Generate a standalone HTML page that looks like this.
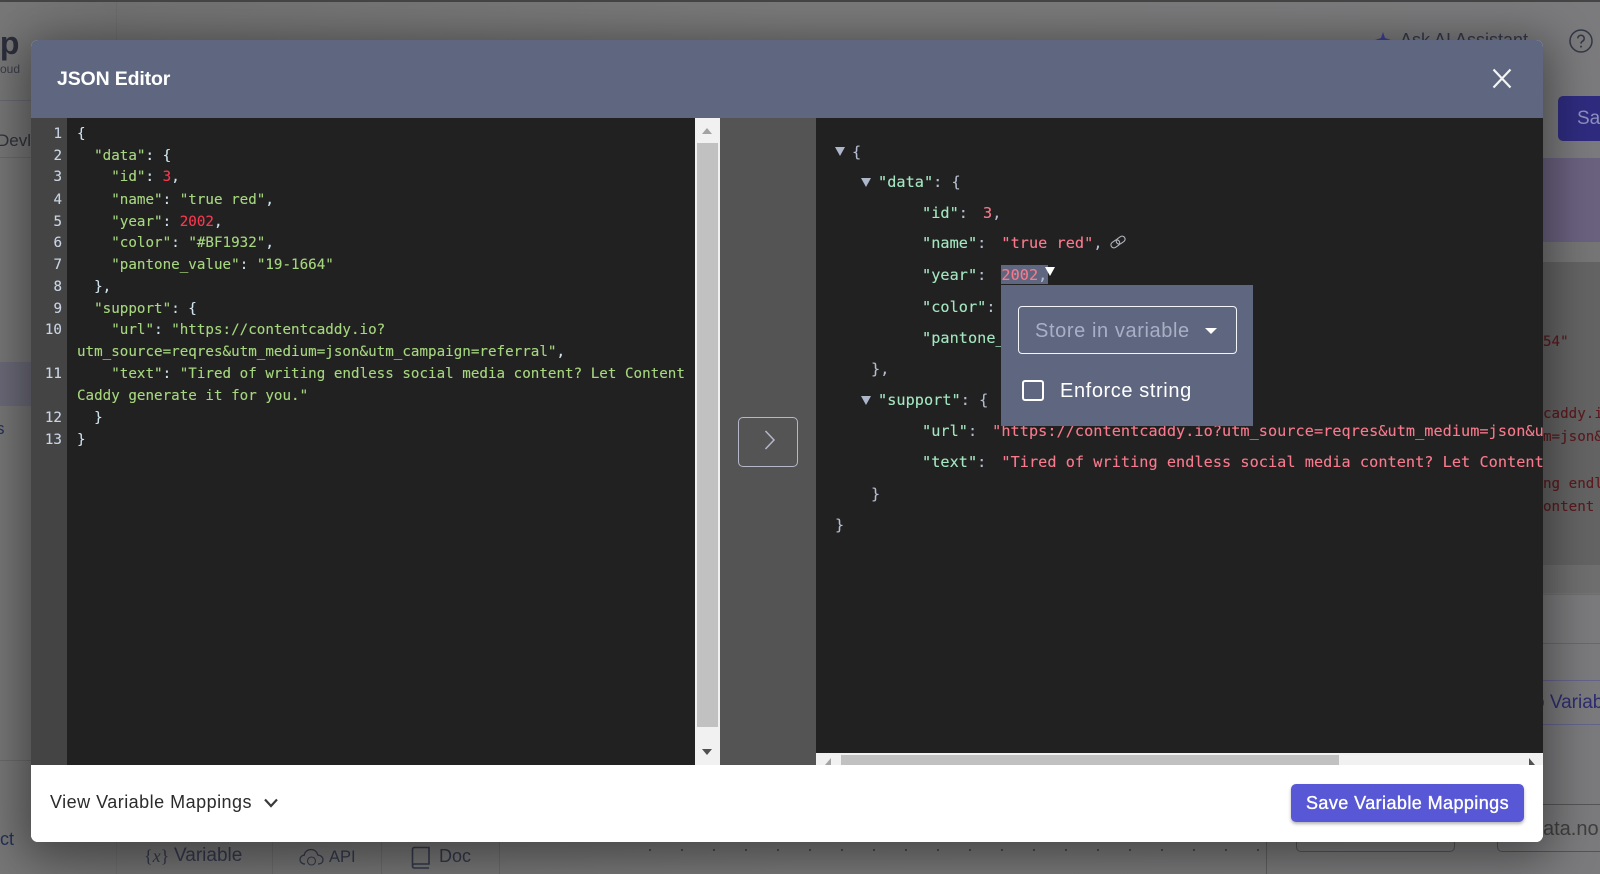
<!DOCTYPE html>
<html lang="en">
<head>
<meta charset="utf-8">
<title>JSON Editor</title>
<style>
html,body{margin:0;padding:0;width:1600px;height:874px;overflow:hidden;background:#787878}
*{box-sizing:border-box}
.a{position:absolute}
#bg{position:absolute;left:0;top:0;width:1600px;height:874px;overflow:hidden;font-family:"Liberation Sans",sans-serif;color:#33384a;background:linear-gradient(90deg,#777 0,#727272 7%,#7a7a7a 50%,#7b7b7d 100%)}
.t{position:absolute;white-space:pre}
#modal{position:absolute;left:31px;top:40px;width:1512px;height:802px;border-radius:7px;overflow:hidden;background:#fff}
#shadow{position:absolute;left:31px;top:40px;width:1512px;height:802px;border-radius:7px;box-shadow:0 8px 46px 8px rgba(0,0,0,.42)}
#head{position:absolute;left:0;top:0;width:1512px;height:78px;background:#5f6780}
#title{position:absolute;left:26px;top:26px;font:bold 19.5px/26px "Liberation Sans",sans-serif;color:#fff;letter-spacing:-.15px;white-space:pre}
#gutter{position:absolute;left:0;top:78px;width:36px;height:647px;background:#444}
#left{position:absolute;left:36px;top:78px;width:628px;height:647px;background:#212121}
#mid{position:absolute;left:689px;top:78px;width:96px;height:647px;background:#545454}
#right{position:absolute;left:785px;top:78px;width:727px;height:647px;background:#212121;overflow:hidden}
.m{font-family:"DejaVu Sans Mono","Liberation Mono",monospace;font-size:14.2px;letter-spacing:.02px;white-space:pre;position:absolute;-webkit-text-stroke:.12px}
.n{color:#c9d4e4;text-align:right;width:31px;left:0;line-height:22px;height:22px}
.l{line-height:22px;height:22px;left:10px;color:#cfe3ee}
.g{color:#a6d67e}.r{color:#f8384f}
.rl{line-height:22px;height:22px;color:#b4bccf;font-size:15.2px;letter-spacing:.05px}
.k{color:#a4e6c0}.v{color:#f87a8c;margin-left:15px}
.tri{position:absolute;width:0;height:0;border-left:5.5px solid transparent;border-right:5.5px solid transparent;border-top:9px solid #aeb6cb}
#pop{position:absolute;left:185px;top:167px;width:252px;height:141px;background:#5f6780}
#sel{position:absolute;left:17px;top:21px;width:219px;height:48px;border:1.5px solid #f4f5f9;border-radius:4px}
.ui{font-family:"Liberation Sans",sans-serif;white-space:pre;position:absolute}
#foot{position:absolute;left:0;top:725px;width:1512px;height:77px;background:#fff}
#btn{position:absolute;left:1260px;top:19px;width:233px;height:38px;background:#5858d6;border-radius:5px;box-shadow:0 2px 3px rgba(0,0,0,.3);color:#fff;text-align:center;font:18px/38px "Liberation Sans",sans-serif;letter-spacing:.42px;-webkit-text-stroke:.35px #fff;white-space:pre}
</style>
</head>
<body>
<div id="bg">
  <div class="a" style="left:0;top:0;width:1600px;height:2px;background:#454545"></div>
  <div class="a" style="left:116px;top:2px;width:1px;height:872px;background:#6c6c6c"></div>
  <div class="t" style="left:-9px;top:24px;font:bold 32px/38px 'Liberation Sans',sans-serif;color:#2c2f3b"> p</div>
  <div class="t" style="left:0;top:61px;font:12px/16px 'Liberation Sans',sans-serif;color:#3b3e4a">oud</div>
  <div class="a" style="left:0;top:100px;width:116px;height:1px;background:#666a70"></div>
  <div class="t" style="left:-3px;top:130px;font:17px/22px 'Liberation Sans',sans-serif;color:#30323c">Devl</div>
  <div class="a" style="left:0;top:157px;width:116px;height:1px;background:#666a70"></div>
  <div class="a" style="left:0;top:362px;width:116px;height:44px;background:#6b6a78"></div>
  <div class="t" style="left:-4px;top:419px;font:17px/20px 'Liberation Sans',sans-serif;color:#25305a">s</div>
  <div class="a" style="left:0;top:760px;width:116px;height:1px;background:#6a6a6a"></div>
  <div class="t" style="left:0;top:829px;font:18px/20px 'Liberation Sans',sans-serif;color:#25305a">ct</div>

  <div class="t" style="left:1400px;top:29px;font:18px/22px 'Liberation Sans',sans-serif;color:#33384a">Ask AI Assistant</div>
  <svg class="a" style="left:1374px;top:30px" width="18" height="14" viewBox="0 0 18 14"><path d="M9 2 L11 8 L17 10 L11 12 L9 18 L7 12 L1 10 L7 8 Z" fill="#3d4090"/></svg>
  <svg class="a" style="left:1568px;top:28px" width="26" height="26" viewBox="0 0 26 26"><circle cx="13" cy="13" r="11" fill="none" stroke="#333744" stroke-width="1.5"/><path d="M9.8 10.4a3.2 3.2 0 1 1 4.8 2.8c-1 .6-1.6 1.2-1.6 2.4" fill="none" stroke="#333744" stroke-width="1.5"/><circle cx="13" cy="18.6" r="1" fill="#333744"/></svg>
  <div class="a" style="left:1558px;top:96px;width:60px;height:45px;border-radius:5px;background:#2f2c80"></div>
  <div class="t" style="left:1577px;top:107px;font:19px/24px 'Liberation Sans',sans-serif;color:#8f8fc0">Sav</div>
  <div class="a" style="left:1543px;top:158px;width:57px;height:84px;background:#6b6280"></div>
  <div class="a" style="left:1543px;top:242px;width:57px;height:20px;background:#767676"></div>
  <div class="a" style="left:1543px;top:262px;width:57px;height:303px;background:#646464"></div>
  <div class="m" style="left:1543px;top:331px;color:#5c1a1e;line-height:22px">54"</div>
  <div class="m" style="left:1543px;top:403px;color:#5c1a1e;line-height:22px">caddy.io</div>
  <div class="m" style="left:1543px;top:426px;color:#5c1a1e;line-height:22px">m=json&amp;u</div>
  <div class="m" style="left:1543px;top:473px;color:#5c1a1e;line-height:22px">ng endless</div>
  <div class="m" style="left:1543px;top:496px;color:#5c1a1e;line-height:22px">ontent C</div>
  <div class="a" style="left:1543px;top:565px;width:57px;height:30px;background:#6f6f6f"></div>
  <div class="a" style="left:1543px;top:593px;width:57px;height:1px;background:#757575"></div>
  <div class="a" style="left:1543px;top:643px;width:57px;height:1px;background:#666a6e"></div>
  <div class="a" style="left:1543px;top:680px;width:57px;height:1px;background:#64648a"></div>
  <div class="t" style="left:1534px;top:691px;font:19px/24px 'Liberation Sans',sans-serif;color:#2d2d70">o Variable</div>
  <div class="a" style="left:1543px;top:724px;width:57px;height:1px;background:#64648a"></div>
  <div class="a" style="left:1497px;top:804px;width:120px;height:48px;border:1px solid #555;border-radius:5px"></div>
  <div class="a" style="left:1296px;top:804px;width:159px;height:48px;border:1px solid #555;border-radius:5px"></div>
  <div class="t" style="left:1543px;top:817px;font:20px/24px 'Liberation Sans',sans-serif;color:#3f3f3f">ata.no</div>
  <div class="a" style="left:1266px;top:842px;width:1px;height:32px;background:#606060"></div>

  <div class="a" style="left:272px;top:842px;width:1px;height:32px;background:#6a6a6a"></div>
  <div class="a" style="left:381px;top:842px;width:1px;height:32px;background:#6a6a6a"></div>
  <div class="a" style="left:499px;top:842px;width:1px;height:32px;background:#6a6a6a"></div>
  <div class="t" style="left:144px;top:844px;font:18px/24px 'Liberation Serif',serif;color:#33384a">{<i>x</i>}</div>
  <div class="t" style="left:174px;top:844px;font:19px/24px 'Liberation Sans',sans-serif;color:#33384a">Variable</div>
  <svg class="a" style="left:299px;top:848px" width="25" height="20" viewBox="0 0 25 20"><path d="M6 16C2.500 16 1 13.500 1 11.500 1 9 3 7.200 5.200 7.200 5.800 3.500 8.800 1.500 12 1.500c3.500 0 6 2.300 6.800 5.500 3 .2 5.200 2.200 5.200 4.800 0 2.400-1.800 4.200-5 4.200" fill="none" stroke="#33384a" stroke-width="1.300"/><circle cx="12.500" cy="13" r="4" fill="none" stroke="#33384a" stroke-width="1.100"/></svg>
  <div class="t" style="left:329px;top:845px;font:16.5px/24px 'Liberation Sans',sans-serif;color:#33384a">API</div>
  <svg class="a" style="left:411px;top:846px" width="20" height="24" viewBox="0 0 20 24"><path d="M1.500 20V3.500Q1.500 1.500 3.500 1.500H18V18H3.500Q1.500 18 1.500 20T3.500 22H18" fill="none" stroke="#33384a" stroke-width="1.600"/></svg>
  <div class="t" style="left:439px;top:844px;font:18px/24px 'Liberation Sans',sans-serif;color:#33384a">Doc</div>
  <div class="a" style="left:640px;top:842px;width:626px;height:32px;background-image:radial-gradient(circle,#3c3c3c 0,#3c3c3c .8px,transparent 1.100px);background-size:32px 32px;background-position:26px -8px"></div>
</div>

<div id="shadow"></div>
<div id="modal">
  <div id="head">
    <div id="title">JSON Editor</div>
    <svg class="a" style="left:1461px;top:28px" width="20" height="21" viewBox="0 0 20 21"><path d="M1.500 1.500 18.500 19.500M18.500 1.500 1.500 19.500" stroke="#f4f4f4" stroke-width="2.200" fill="none"/></svg>
  </div>

  <div id="gutter">
    <div class="m n" style="top:5px">1</div>
    <div class="m n" style="top:27px">2</div>
    <div class="m n" style="top:48px">3</div>
    <div class="m n" style="top:71px">4</div>
    <div class="m n" style="top:93px">5</div>
    <div class="m n" style="top:114px">6</div>
    <div class="m n" style="top:136px">7</div>
    <div class="m n" style="top:158px">8</div>
    <div class="m n" style="top:180px">9</div>
    <div class="m n" style="top:201px">10</div>
    <div class="m n" style="top:245px">11</div>
    <div class="m n" style="top:289px">12</div>
    <div class="m n" style="top:311px">13</div>
  </div>

  <div id="left">
    <div class="m l" style="top:5px">{</div>
    <div class="m l" style="top:27px">  <span class="g">"data"</span>: {</div>
    <div class="m l" style="top:48px">    <span class="g">"id"</span>: <span class="r">3</span>,</div>
    <div class="m l" style="top:71px">    <span class="g">"name"</span>: <span class="g">"true red"</span>,</div>
    <div class="m l" style="top:93px">    <span class="g">"year"</span>: <span class="r">2002</span>,</div>
    <div class="m l" style="top:114px">    <span class="g">"color"</span>: <span class="g">"#BF1932"</span>,</div>
    <div class="m l" style="top:136px">    <span class="g">"pantone_value"</span>: <span class="g">"19-1664"</span></div>
    <div class="m l" style="top:158px">  },</div>
    <div class="m l" style="top:180px">  <span class="g">"support"</span>: {</div>
    <div class="m l" style="top:201px">    <span class="g">"url"</span>: <span class="g">"https://contentcaddy.io?</span></div>
    <div class="m l" style="top:223px"><span class="g">utm_source=reqres&amp;utm_medium=json&amp;utm_campaign=referral"</span>,</div>
    <div class="m l" style="top:245px">    <span class="g">"text"</span>: <span class="g">"Tired of writing endless social media content? Let Content</span></div>
    <div class="m l" style="top:267px"><span class="g">Caddy generate it for you."</span></div>
    <div class="m l" style="top:289px">  }</div>
    <div class="m l" style="top:311px">}</div>
  </div>

  <!-- vertical scrollbar -->
  <div class="a" style="left:664px;top:78px;width:25px;height:647px;background:#f1f1f1"></div>
  <div class="a" style="left:666px;top:103px;width:21px;height:584px;background:#c1c1c1"></div>
  <div class="a" style="left:671px;top:88px;width:0;height:0;border-left:5.5px solid transparent;border-right:5.5px solid transparent;border-bottom:6px solid #a3a3a3"></div>
  <div class="a" style="left:671px;top:709px;width:0;height:0;border-left:5.500px solid transparent;border-right:5.500px solid transparent;border-top:6px solid #505050"></div>

  <div id="mid">
    <div class="a" style="left:18px;top:299px;width:60px;height:50px;border:1.500px solid #b4b8c8;border-radius:5px"></div>
    <svg class="a" style="left:44px;top:312px" width="12" height="20" viewBox="0 0 12 20"><path d="M1.500 1 10 10 1.500 19" fill="none" stroke="#b4b8c8" stroke-width="1.500"/></svg>
  </div>

  <div id="right">
    <div class="tri" style="left:19px;top:29px"></div>
    <div class="m rl" style="left:36px;top:23px">{</div>
    <div class="tri" style="left:45px;top:60px"></div>
    <div class="m rl" style="left:62px;top:53px"><span class="k">"data"</span>: {</div>
    <div class="m rl" style="left:106px;top:84px"><span class="k">"id"</span>:<span class="v">3</span>,</div>
    <div class="m rl" style="left:106px;top:114px"><span class="k">"name"</span>:<span class="v">"true red"</span>,</div>
    <svg class="a" style="left:293px;top:116px" width="18" height="16" viewBox="0 0 18 16"><g fill="none" stroke="#b0b4bd" stroke-width="1.100" transform="rotate(-35 9 8)"><rect x="1" y="5" width="9.500" height="6" rx="3"/><rect x="7.500" y="5" width="9.500" height="6" rx="3"/></g></svg>
    <div class="a" style="left:185px;top:147px;width:47px;height:19px;background:#5f6780"></div>
    <div class="m rl" style="left:106px;top:146px"><span class="k">"year"</span>:<span class="v">2002</span>,</div>
    <div class="tri" style="left:229px;top:149px;border-top-color:#fff"></div>
    <div class="m rl" style="left:106px;top:178px"><span class="k">"color"</span>:<span class="v">"#BF1932"</span>,</div>
    <div class="m rl" style="left:106px;top:209px"><span class="k">"pantone_value"</span>:<span class="v">"19-1664"</span></div>
    <div class="m rl" style="left:55px;top:240px">},</div>
    <div class="tri" style="left:45px;top:278px"></div>
    <div class="m rl" style="left:62px;top:271px"><span class="k">"support"</span>: {</div>
    <div class="m rl" style="left:106px;top:302px"><span class="k">"url"</span>:<span class="v">"https://contentcaddy.io?utm_source=reqres&amp;utm_medium=json&amp;utm_campaign=referral"</span>,</div>
    <div class="m rl" style="left:106px;top:333px"><span class="k">"text"</span>:<span class="v">"Tired of writing endless social media content? Let Content Caddy generate it for you."</span></div>
    <div class="m rl" style="left:55px;top:365px">}</div>
    <div class="m rl" style="left:19px;top:396px">}</div>

    <div id="pop">
      <div id="sel">
        <div class="ui" style="left:16px;top:11px;font-size:20px;line-height:26px;color:#a9afc6;letter-spacing:.6px">Store in variable</div>
        <div class="a" style="left:186px;top:21px;width:0;height:0;border-left:6px solid transparent;border-right:6px solid transparent;border-top:6px solid #fff"></div>
      </div>
      <div class="a" style="left:21px;top:95px;width:22px;height:21px;border:2.800px solid #fff;border-radius:3px"></div>
      <div class="ui" style="left:59px;top:92px;font-size:20px;line-height:28px;color:#fff;letter-spacing:.6px">Enforce string</div>
    </div>

    <!-- horizontal scrollbar -->
    <div class="a" style="left:0;top:635px;width:727px;height:12px;background:#f1f1f1"></div>
    <div class="a" style="left:25px;top:637px;width:498px;height:10px;background:#c1c1c1"></div>
    <svg class="a" style="left:9px;top:640px" width="8" height="7" viewBox="0 0 8 7"><path d="M6 0V7H0Z" fill="#a3a3a3"/></svg>
    <svg class="a" style="left:713px;top:640px" width="8" height="7" viewBox="0 0 8 7"><path d="M0 0 6 7H0Z" fill="#505050"/></svg>
  </div>

  <div id="foot">
    <div class="ui" style="left:19px;top:24px;font-size:18px;line-height:26px;color:#2b2b2b;letter-spacing:.48px">View Variable Mappings</div>
    <svg class="a" style="left:232px;top:32px" width="16" height="12" viewBox="0 0 16 12"><path d="M2 2.500 8 9 14 2.500" fill="none" stroke="#3a3a3a" stroke-width="2.200"/></svg>
    <div id="btn">Save Variable Mappings</div>
  </div>
</div>
</body>
</html>
